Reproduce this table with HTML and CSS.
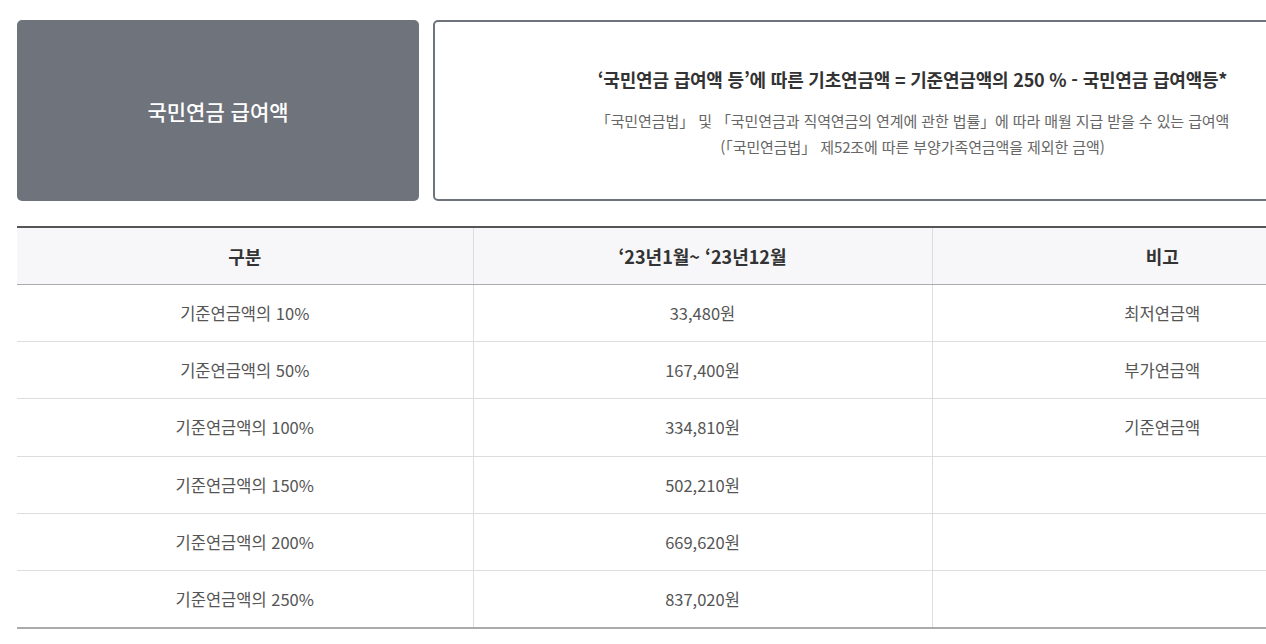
FILE: index.html
```html
<!DOCTYPE html>
<html lang="ko">
<head>
<meta charset="utf-8">
<link rel="stylesheet" href="styles.css">
</head>
<body>
<div class="wrap">
  <div class="top">
    <div class="label">국민연금 급여액</div>
    <div class="desc">
      <p class="formula">‘국민연금 급여액 등’에 따른 기초연금액 = 기준연금액의 250 % - 국민연금 급여액등*</p>
      <p class="note">「국민연금법」 및 「국민연금과 직역연금의 연계에 관한 법률」에 따라 매월 지급 받을 수 있는 급여액<br>(「국민연금법」 제52조에 따른 부양가족연금액을 제외한 금액)</p>
    </div>
  </div>
  <table class="tbl">
    <colgroup><col class="c1"><col class="c2"><col class="c3"></colgroup>
    <thead>
      <tr><th>구분</th><th>‘23년1월~ ‘23년12월</th><th>비고</th></tr>
    </thead>
    <tbody>
      <tr><td>기준연금액의 10%</td><td>33,480원</td><td>최저연금액</td></tr>
      <tr><td>기준연금액의 50%</td><td>167,400원</td><td>부가연금액</td></tr>
      <tr><td>기준연금액의 100%</td><td>334,810원</td><td>기준연금액</td></tr>
      <tr><td>기준연금액의 150%</td><td>502,210원</td><td></td></tr>
      <tr><td>기준연금액의 200%</td><td>669,620원</td><td></td></tr>
      <tr><td>기준연금액의 250%</td><td>837,020원</td><td></td></tr>
    </tbody>
  </table>
</div>
</body>
</html>
```

FILE: styles.css
```css
html, body {
  margin: 0;
  padding: 0;
  background: #fff;
}
body {
  font-family: "Noto Sans CJK KR", "Noto Sans", sans-serif;
  color: #555;
  overflow: hidden;
}
.wrap {
  width: 1375px;
  padding: 20px 0 0 17px;
}
.top {
  display: flex;
  gap: 14px;
  height: 181px;
}
.label {
  width: 402px;
  flex: none;
  background: #6f737b;
  border-radius: 5px;
  color: #fff;
  font-size: 21px;
  font-weight: 500;
  display: flex;
  align-items: center;
  justify-content: center;
}
.desc {
  flex: 1;
  border: 2px solid #6f737b;
  border-radius: 5px;
  display: flex;
  flex-direction: column;
  align-items: center;
  justify-content: center;
  text-align: center;
  padding-top: 4px;
}
.formula {
  margin: 0 0 16px;
  font-size: 18px;
  font-weight: 700;
  color: #333;
  letter-spacing: -0.2px;
  line-height: 26px;
}
.note {
  margin: 0;
  font-size: 15px;
  color: #666;
  letter-spacing: -0.1px;
  line-height: 26px;
}
.tbl {
  margin-top: 25px;
  width: 1375px;
  border-collapse: collapse;
  table-layout: fixed;
  border-top: 2px solid #555;
  border-bottom: 2px solid #aaa;
}
.c1 { width: 456px; }
.c2 { width: 459px; }
.c3 { width: 460px; }
.tbl th {
  background: #f7f7f9;
  height: 56px;
  padding: 0;
  font-size: 18px;
  font-weight: 700;
  color: #333;
  border-bottom: 1px solid #aaa;
  border-left: 1px solid #ddd;
}
.tbl td {
  height: 56.2px;
  padding: 0;
  text-align: center;
  font-size: 16.5px;
  color: #555;
  border-top: 1px solid #ddd;
  border-left: 1px solid #ddd;
}
.tbl tbody tr:first-child td { border-top: 0; }
.tbl th:first-child, .tbl td:first-child { border-left: 0; }
```
